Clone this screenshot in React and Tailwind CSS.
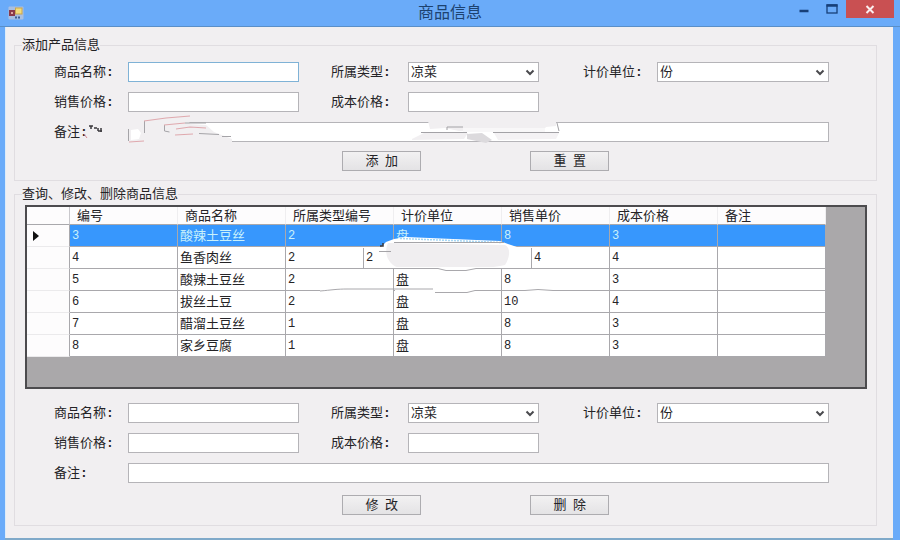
import React from 'react';

const columns = ['编号', '商品名称', '所属类型编号', '计价单位', '销售单价', '成本价格', '备注'];

const products = [
    { id: '3', name: '酸辣土豆丝', type: '2', unit: '盘', price: '8', cost: '3' },
    { id: '4', name: '鱼香肉丝', type: '2', unit: '2', price: '4', cost: '4', shifted: true },
    { id: '5', name: '酸辣土豆丝', type: '2', unit: '盘', price: '8', cost: '3' },
    { id: '6', name: '拔丝土豆', type: '2', unit: '盘', price: '10', cost: '4' },
    { id: '7', name: '醋溜土豆丝', type: '1', unit: '盘', price: '8', cost: '3' },
    { id: '8', name: '家乡豆腐', type: '1', unit: '盘', price: '8', cost: '3' },
];

const AppIcon = () => (
    <svg width="16" height="14" viewBox="0 0 16 14" aria-hidden="true">
        <rect x="0.5" y="0.5" width="15" height="13" rx="1" fill="#a9bfe2" />
        <rect x="1" y="4" width="6" height="6" fill="#8a3a4c" />
        <rect x="3" y="6" width="2" height="2" fill="#e0a7a0" />
        <rect x="7.5" y="2" width="6.5" height="6" fill="#f3dc7c" stroke="#c9a64e" />
        <path d="M7 11.500h6" stroke="#3d5f94" strokeWidth="2" strokeDasharray="2 1" />
    </svg>
);

const TitleBar = () => (
    <header className="relative flex h-[27px] items-center justify-center border-b border-[#5a8fc8] bg-[#6aabf9]">
        <div className="absolute left-2 top-[6px]">
            <AppIcon />
        </div>
        <h1 className="text-[16px] leading-[26px] text-[#1d426f]">商品信息</h1>
        <div className="absolute right-[6px] top-0 flex h-[18px]">
            <button type="button" aria-label="最小化" className="flex w-[28px] items-center justify-center">
                <svg width="10" height="10" viewBox="0 0 10 10">
                    <path d="M0.500 7h9" stroke="#173f78" strokeWidth="2.500" />
                </svg>
            </button>
            <button type="button" aria-label="最大化" className="flex w-[28px] items-center justify-center">
                <svg width="12" height="10" viewBox="0 0 12 10">
                    <rect x="1" y="1" width="10" height="8" fill="none" stroke="#173f78" strokeWidth="1.300" />
                    <path d="M0.500 1.500h11" stroke="#173f78" strokeWidth="2.500" />
                </svg>
            </button>
            <button type="button" aria-label="关闭" className="flex w-[48px] items-center justify-center bg-[#c95052]">
                <svg width="10" height="9" viewBox="0 0 10 9">
                    <path d="M1.500 1l7 7M8.500 1l-7 7" stroke="#fbeeee" strokeWidth="2" />
                </svg>
            </button>
        </div>
    </header>
);

const FieldLabel = ({ id, className = '', children }) => (
    <label htmlFor={id} className={`whitespace-nowrap ${className}`}>
        {children}
        <span className="font-['Liberation_Mono',monospace] font-bold">:</span>
    </label>
);

const Field = ({ id, label, labelClass, wide = '', focused = false }) => (
    <>
        <FieldLabel id={id} className={labelClass}>
            {label}
        </FieldLabel>
        <input
            id={id}
            type="text"
            className={`h-5 w-full border bg-white px-[2px] outline-none ${focused ? 'border-[#7fb2d6]' : 'border-[#b5b4b8]'} ${wide}`}
        />
    </>
);

const SelectField = ({ id, label, labelClass, options }) => (
    <>
        <FieldLabel id={id} className={labelClass}>
            {label}
        </FieldLabel>
        <div className="relative">
            <select
                id={id}
                className="block h-5 w-full appearance-none border border-[#b5b4b8] bg-white pl-[2px] leading-[18px] outline-none"
            >
                {options.map((option) => (
                    <option key={option}>{option}</option>
                ))}
            </select>
            <svg className="pointer-events-none absolute right-1 top-[7px]" width="10" height="7" viewBox="0 0 10 7">
                <path d="M1.500 1.500L5 5l3.500-3.500" fill="none" stroke="#4a4a4e" strokeWidth="2" />
            </svg>
        </div>
    </>
);

const ProductFields = ({ prefix, focused }) => (
    <div className="grid grid-cols-[74px_171fr_109px_131fr_118px_172fr] items-center gap-y-[10px] pl-[39px] pr-[47px]">
        <Field id={`${prefix}-name`} label="商品名称" focused={focused} />
        <SelectField id={`${prefix}-type`} label="所属类型" labelClass="pl-8" options={['凉菜', '热菜']} />
        <SelectField id={`${prefix}-unit`} label="计价单位" labelClass="pl-11" options={['份', '盘']} />
        <Field id={`${prefix}-price`} label="销售价格" />
        <Field id={`${prefix}-cost`} label="成本价格" labelClass="pl-8" />
        <Field id={`${prefix}-note`} label="备注" labelClass="col-start-1" wide="col-span-5" />
    </div>
);

const Actions = ({ labels }) => (
    <div className="flex gap-[109px] pl-[38%]">
        {labels.map((label) => (
            <button
                key={label}
                type="button"
                className="h-5 w-[79px] border border-[#adacb0] bg-linear-to-b from-[#f2f1f2] to-[#e4e3e5] leading-[18px]"
            >
                {label}
            </button>
        ))}
    </div>
);

const cell = 'h-[22px] border-b border-r border-[#a9a8ac] p-0 pl-[2px] text-left font-normal leading-[20px]';
const num = "font-['Liberation_Mono','Noto_Sans_CJK_SC',monospace] text-[12px]";

const ProductRow = ({ product, selected }) => (
    <tr className={selected ? 'bg-[#3797fd] text-[#c9f1fb]' : 'bg-white'}>
        <th scope="row" aria-label={product.name} className="h-[22px] border-b border-r border-b-[#ebeaec] border-r-[#a9a8ac] bg-[#fdfcfd] p-0">
            {selected && (
                <svg className="ml-[6px]" width="6" height="10" viewBox="0 0 6 10">
                    <path d="M0 0l6 5-6 5z" fill="#111" />
                </svg>
            )}
        </th>
        <td className={`${cell} ${num}`}>{product.id}</td>
        <td className={cell}>{product.name}</td>
        {product.shifted ? (
            <>
                <td className={`${cell} ${num} border-r-transparent`}>
                    <div className="flex justify-between">
                        <span>{product.type}</span>
                        <span className="w-[30px] border-l border-[#a9a8ac] pl-[2px]">{product.unit}</span>
                    </div>
                </td>
                <td className={`${cell} border-r-transparent`} />
                <td className={`${cell} ${num}`}>
                    <div className="ml-[27px] border-l border-[#a9a8ac] pl-[2px]">{product.price}</div>
                </td>
            </>
        ) : (
            <>
                <td className={`${cell} ${num}`}>{product.type}</td>
                <td className={cell}>{product.unit}</td>
                <td className={`${cell} ${num}`}>{product.price}</td>
            </>
        )}
        <td className={`${cell} ${num}`}>{product.cost}</td>
        <td className={cell} />
    </tr>
);

const ProductTable = () => (
    <div className="ml-[10px] mr-[9px] h-[184px] border-2 border-[#4c4b4e] bg-[#aaa8aa] pr-[39px]">
        <table className="w-full table-fixed border-separate border-spacing-0">
            <thead>
                <tr className="bg-[#fdfcfd]">
                    <th aria-label="选择" className="h-[18px] w-[43px] border-b border-r border-b-[#a9a8ac] border-r-[#c9c8cc] p-0" />
                    {columns.map((column) => (
                        <th
                            key={column}
                            scope="col"
                            className="h-[18px] border-b border-r border-b-[#a9a8ac] border-r-[#efeef0] p-0 pl-[7px] text-left font-normal leading-[17px]"
                        >
                            {column}
                        </th>
                    ))}
                </tr>
            </thead>
            <tbody>
                {products.map((product, i) => (
                    <ProductRow key={product.id} product={product} selected={i === 0} />
                ))}
            </tbody>
        </table>
    </div>
);

/* Eraser strokes and stray pen marks lying over the form and the grid */
const Scribbles = () => (
    <svg className="pointer-events-none absolute left-0 top-0" width="900" height="540" viewBox="0 0 900 540" fill="none" aria-hidden="true">
        {/* note label */}
        <path d="M89 126h4M91 126v3M94 128h3M98 128v3M101 128v4M98 131h4" stroke="#3a393c" strokeWidth="1.500" />
        <path d="M84 134l3 4" stroke="#d98a92" />

        {/* note box, left end */}
        <path d="M127 116h60l3 8 16 1 8 7 18 7v5H127z" fill="#f1eff1" />
        <path d="M131 130l7-1 3 4-2 6-8 1z" fill="#fff" />
        <path d="M128.500 129v12M144.500 133v-12M164.500 125v6l5 1M185 123h21M199 133.500l20 1M222 136.500h9" stroke="#a5a4a8" />
        <path d="M144 121l22-3 24-2M164 125l21-2M176 129l14-2 16 1M175 135l18-1M129 142l15-1" stroke="#dfa9ae" strokeWidth="1.200" />

        {/* note box, middle */}
        <path d="M428 121h128v5l-10 1-3 4h-84l-14-3-15 1z" fill="#f1eff1" />
        <path d="M463 128h82v4h-82z" fill="#f8f7f8" />
        <path d="M412 139l12-6h44l-4 6-52 1z" fill="#f1eff1" />
        <path d="M494 133h65l-3 6-58 1z" fill="#f4f2f4" />
        <path d="M467 134l15-1 10 7-6 3-19-4z" fill="#dcdadd" />
        <path d="M447 130v-3h16M421 132.500h46M493 132.500h66M557 123l2 8" stroke="#a3a2a6" />

        {/* grid */}
        <path d="M380 248l6-6 8-3 12-2 94 4 8 3 9 3 14 1v3l-20 16H393l-8-12z" fill="#fff" />
        <path d="M388 243l117 2c6 3 5 12 0 20-18 5-88 5-106 3-10-3-16-14-11-25z" fill="#f0eef0" />
        <path d="M400 238.500l102 4" stroke="#a5d6f4" strokeWidth="1.500" strokeDasharray="2 1" />
        <path d="M394 242.500h110" stroke="#a5a4a8" />
        <path d="M380 246h3v-3" stroke="#3a393c" strokeWidth="1.500" />
        <path d="M379 251.500h12" stroke="#a5a4a8" />
        <path d="M395 268.500h105" stroke="#fff" strokeWidth="3" />
        <path d="M393 268.500h45l8 2h20l10-2h29" stroke="#a9a8ac" />
        <path d="M320 290.500h73M395 290.500h105M503 290.500h70" stroke="#fff" strokeWidth="2" />
        <path d="M320 291c12-1 16-2 28-2h85M435 292.500h32l8-2h50l13-1 15 1h20" stroke="#a9a8ac" />
    </svg>
);

const App = () => {
    return (
        <main className="relative flex min-h-screen flex-col bg-[#6aabf9] font-['Liberation_Sans','Noto_Sans_CJK_SC',sans-serif] text-[13px] leading-[18px] text-[#242326]">
            <TitleBar />
            <div className="mb-[2px] ml-[5px] mr-[7px] flex-1 border-l border-[#dcecfa] bg-[#f1eff1] pl-2 pr-4 pt-[11px] shadow-[0_2px_0_#7fa9c9]">
                <fieldset className="min-w-0 border border-[#e0dde1] pb-[9px] pt-[10px]">
                    <legend className="ml-[7px] leading-[14px]">添加产品信息</legend>
                    <ProductFields prefix="add" focused />
                    <div className="mt-[9px]">
                        <Actions labels={['添\u2002加', '重\u2002置']} />
                    </div>
                </fieldset>

                <fieldset className="mt-[6px] min-w-0 border border-[#e0dde1] pb-[10px] pt-[4px]">
                    <legend className="ml-[7px] leading-[14px]">查询、修改、删除商品信息</legend>
                    <ProductTable />
                    <div className="mt-[14px]">
                        <ProductFields prefix="edit" />
                    </div>
                    <div className="mt-[12px]">
                        <Actions labels={['修\u2002改', '删\u2002除']} />
                    </div>
                </fieldset>
            </div>
            <Scribbles />
        </main>
    );
};

export default App;
